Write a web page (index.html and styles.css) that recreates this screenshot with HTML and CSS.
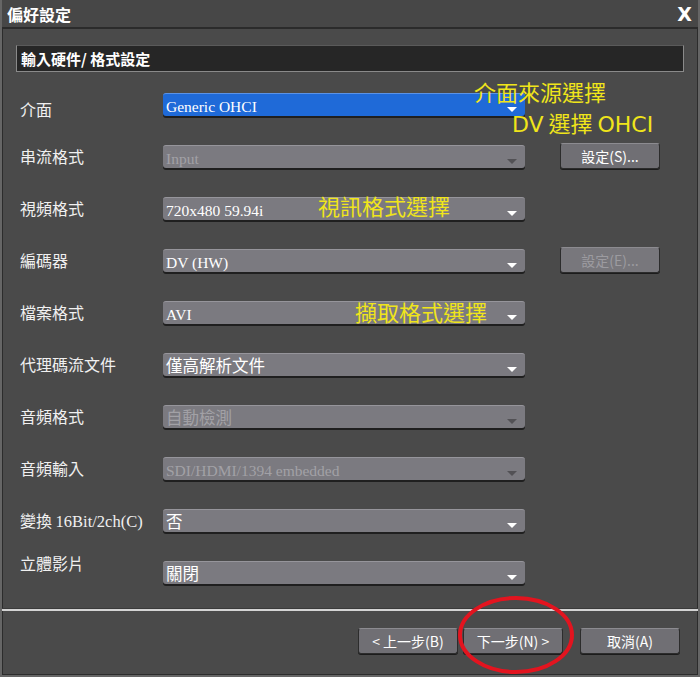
FILE: index.html
```html
<!DOCTYPE html>
<html lang="zh-Hant">
<head>
    <meta charset="UTF-8">
    <title>偏好設定</title>
    <link rel="stylesheet" href="styles.css">
</head>
<body>
    <div class="window">
        <div class="titlebar">
            <span class="title">偏好設定</span>
            <span class="close">X</span>
        </div>

        <div class="content">
            <div class="section-head">輸入硬件/ 格式設定</div>

            <div class="form">
                <div class="row">
                    <span class="label label-low">介面</span>
                    <div class="select selected"><span class="latin">Generic OHCI</span><i class="arrow"></i></div>
                </div>
                <div class="row">
                    <span class="label">串流格式</span>
                    <div class="select disabled"><span class="latin">Input</span><i class="arrow"></i></div>
                    <button class="btn side">設定(S)...</button>
                </div>
                <div class="row">
                    <span class="label">視頻格式</span>
                    <div class="select"><span class="latin">720x480 59.94i</span><i class="arrow"></i></div>
                </div>
                <div class="row">
                    <span class="label">編碼器</span>
                    <div class="select"><span class="latin">DV (HW)</span><i class="arrow"></i></div>
                    <button class="btn side" disabled>設定(E)...</button>
                </div>
                <div class="row">
                    <span class="label">檔案格式</span>
                    <div class="select"><span class="latin">AVI</span><i class="arrow"></i></div>
                </div>
                <div class="row">
                    <span class="label">代理碼流文件</span>
                    <div class="select"><span>僅高解析文件</span><i class="arrow"></i></div>
                </div>
                <div class="row">
                    <span class="label">音頻格式</span>
                    <div class="select disabled"><span>自動檢測</span><i class="arrow"></i></div>
                </div>
                <div class="row">
                    <span class="label">音頻輸入</span>
                    <div class="select disabled"><span class="latin">SDI/HDMI/1394 embedded</span><i class="arrow"></i></div>
                </div>
                <div class="row">
                    <span class="label">變換 <span class="latin">16Bit/2ch(C)</span></span>
                    <div class="select"><span>否</span><i class="arrow"></i></div>
                </div>
                <div class="row">
                    <span class="label label-high">立體影片</span>
                    <div class="select"><span>關閉</span><i class="arrow"></i></div>
                </div>
            </div>
        </div>

        <div class="footer">
            <button class="btn">&lt; 上一步(B)</button>
            <button class="btn next">下一步(N) &gt;</button>
            <button class="btn cancel">取消(A)</button>
        </div>

        <!-- annotations drawn over the dialog -->
        <span class="note note-iface">介面來源選擇</span>
        <span class="note note-dv"><span class="note-latin">DV</span> 選擇 <span class="note-latin">OHCI</span></span>
        <span class="note note-video">視訊格式選擇</span>
        <span class="note note-file">擷取格式選擇</span>
        <svg class="circle" width="124" height="84" viewBox="0 0 124 84">
            <ellipse cx="62" cy="42" rx="56" ry="37" fill="none" stroke="#e3141f" stroke-width="4"/>
        </svg>
    </div>
</body>
</html>
```

FILE: styles.css
```css
body {
    margin: 0;
    background-color: #4a4a4a;
    font-family: "Noto Sans CJK TC", "Noto Sans", sans-serif;
    color: #f4f4f4;
}
.window {
    position: relative;
    width: 700px;
    height: 677px;
    box-sizing: border-box;
    border: 2px solid #666;
    border-top: none;
    box-shadow: inset 1px 0 0 #2c2c2c, inset -1px 0 0 #2c2c2c, inset 0 -1px 0 #2c2c2c;
    display: flex;
    flex-direction: column;
}
.titlebar {
    height: 27px;
    background-color: #474747;
    border-bottom: 2px solid #2b2b2b;
    display: flex;
    align-items: center;
    justify-content: space-between;
    padding: 0 6px 0 5px;
}
.title {
    font-size: 16px;
    font-weight: bold;
    color: #fff;
}
.close {
    font-family: "DejaVu Sans", sans-serif;
    font-size: 19px;
    font-weight: bold;
    color: #fff;
}
.content {
    flex: 1;
    padding: 16px 14px 0 14px;
}
.section-head {
    height: 25px;
    background-color: #262626;
    border: 1px solid #8a8a8a;
    border-top-color: #5a5a5a;
    padding-left: 4px;
    font-size: 15px;
    font-weight: bold;
    line-height: 25px;
    color: #fff;
}
.form {
    margin-top: 20px;
    padding-left: 4px;
    display: flex;
    flex-direction: column;
    gap: 28px;
}
.row {
    display: flex;
    align-items: center;
    height: 24px;
}
.label {
    width: 143px;
    font-size: 16px;
    color: #f0f0f0;
    white-space: nowrap;
}
.label .latin {
    font-size: 16.5px;
}
.label-low {
    margin-top: 10px;
}
.label-high {
    margin-top: -19px;
}
.latin {
    font-family: "Liberation Serif", serif;
    font-size: 15.5px;
}
.select {
    position: relative;
    width: 362px;
    height: 23px;
    box-sizing: border-box;
    background-color: #7b7a80;
    border-top: 1px solid #96959b;
    border-radius: 3px;
    box-shadow: 0 2px 0 #1f1f1f;
    padding-left: 3px;
    font-size: 16.5px;
    line-height: 22px;
    color: #fff;
}
.select.selected {
    background-color: #1f6ad8;
    border-top-color: #5b93e6;
}
.select.disabled {
    color: #a2a1a6;
}
.arrow {
    position: absolute;
    right: 8px;
    top: 13px;
    border-left: 5px solid transparent;
    border-right: 5px solid transparent;
    border-top: 5px solid #fff;
}
.select.disabled .arrow {
    border-top-color: #525155;
}
.btn {
    width: 100px;
    height: 26px;
    background-color: #706f74;
    border: 1px solid #2c2c2c;
    border-top-color: #8c8b90;
    border-radius: 3px;
    box-shadow: 0 1px 0 #1c1c1c;
    font-family: "Noto Sans CJK TC", sans-serif;
    font-size: 14px;
    color: #fff;
    padding: 0;
}
.btn:disabled {
    background-color: #78777c;
    color: #9c9ba0;
}
.side {
    margin-left: 35px;
}
.footer {
    height: 66px;
    box-sizing: border-box;
    border-top: 2px solid #d4d4d4;
    box-shadow: 0 -1px 0 #3a3a3a;
    display: flex;
    align-items: flex-start;
    padding: 17px 0 0 356px;
    gap: 5px;
}
.footer .cancel {
    margin-left: 12px;
}
.note {
    position: absolute;
    font-family: "Noto Sans CJK TC", sans-serif;
    font-size: 22px;
    line-height: 24px;
    color: #f0e51a;
    white-space: nowrap;
}
.note-latin {
    font-family: "DejaVu Sans", sans-serif;
}
.note-iface { left: 472px; top: 79px; }
.note-dv { left: 510px; top: 110px; }
.note-video { left: 316px; top: 193px; }
.note-file { left: 353px; top: 299px; }
.circle {
    position: absolute;
    left: 452px;
    top: 593px;
}
```
